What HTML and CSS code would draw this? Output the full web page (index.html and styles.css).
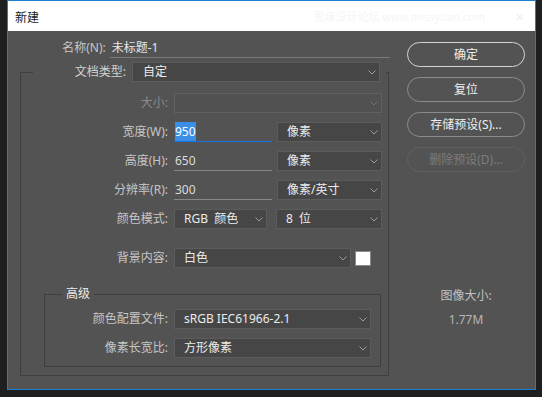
FILE: index.html
```html
<!DOCTYPE html>
<html lang="zh">
<head>
<meta charset="utf-8">
<title>新建</title>
<link rel="stylesheet" href="styles.css">
</head>
<body>
<div class="window">
  <div class="titlebar">
    <span class="title">新建</span>
    <span class="watermark">思缘设计论坛 www.missyuan.com</span>
    <span class="close">✕</span>
  </div>
  <div class="content">
    <div class="form">
      <div class="name-row">
        <span class="name-label">名称(N):</span>
        <div class="name-input">未标题-1</div>
      </div>
      <fieldset class="group main">
        <legend class="main-legend">
          <span class="legend-label">文档类型:</span>
          <div class="select w-doc"><span>自定</span><svg class="chev" width="8" height="5" viewBox="0 0 8 5"><polyline points="0.5,0.5 4,4 7.5,0.5"/></svg></div>
        </legend>
        <div class="rows">
          <div class="row">
            <span class="label disabled">大小:</span>
            <div class="select disabled-select w-size"><span></span><svg class="chev" width="8" height="5" viewBox="0 0 8 5"><polyline points="0.5,0.5 4,4 7.5,0.5"/></svg></div>
          </div>
          <div class="row">
            <span class="label">宽度(W):</span>
            <div class="input focus"><span class="sel">950</span></div>
            <div class="select w-unit"><span>像素</span><svg class="chev" width="8" height="5" viewBox="0 0 8 5"><polyline points="0.5,0.5 4,4 7.5,0.5"/></svg></div>
          </div>
          <div class="row">
            <span class="label">高度(H):</span>
            <div class="input">650</div>
            <div class="select w-unit"><span>像素</span><svg class="chev" width="8" height="5" viewBox="0 0 8 5"><polyline points="0.5,0.5 4,4 7.5,0.5"/></svg></div>
          </div>
          <div class="row">
            <span class="label">分辨率(R):</span>
            <div class="input">300</div>
            <div class="select w-unit"><span>像素/英寸</span><svg class="chev" width="8" height="5" viewBox="0 0 8 5"><polyline points="0.5,0.5 4,4 7.5,0.5"/></svg></div>
          </div>
          <div class="row">
            <span class="label">颜色模式:</span>
            <div class="select w-mode"><span>RGB&nbsp; 颜色</span><svg class="chev" width="8" height="5" viewBox="0 0 8 5"><polyline points="0.5,0.5 4,4 7.5,0.5"/></svg></div>
            <div class="select w-bits"><span>8&nbsp; 位</span><svg class="chev" width="8" height="5" viewBox="0 0 8 5"><polyline points="0.5,0.5 4,4 7.5,0.5"/></svg></div>
          </div>
          <div class="row bg-row">
            <span class="label">背景内容:</span>
            <div class="select w-bg"><span>白色</span><svg class="chev" width="8" height="5" viewBox="0 0 8 5"><polyline points="0.5,0.5 4,4 7.5,0.5"/></svg></div>
            <div class="swatch"></div>
          </div>
        </div>
        <fieldset class="group adv">
          <legend class="adv-legend">高级</legend>
          <div class="rows adv-rows">
            <div class="row">
              <span class="label adv-label">颜色配置文件:</span>
              <div class="select w-adv"><span>sRGB IEC61966-2.1</span><svg class="chev" width="8" height="5" viewBox="0 0 8 5"><polyline points="0.5,0.5 4,4 7.5,0.5"/></svg></div>
            </div>
            <div class="row">
              <span class="label adv-label">像素长宽比:</span>
              <div class="select w-adv"><span>方形像素</span><svg class="chev" width="8" height="5" viewBox="0 0 8 5"><polyline points="0.5,0.5 4,4 7.5,0.5"/></svg></div>
            </div>
          </div>
        </fieldset>
      </fieldset>
    </div>
    <div class="side">
      <button class="btn primary">确定</button>
      <button class="btn">复位</button>
      <button class="btn">存储预设(S)...</button>
      <button class="btn off">删除预设(D)...</button>
      <div class="info">
        <div class="info-label">图像大小:</div>
        <div class="info-value">1.77M</div>
      </div>
    </div>
  </div>
</div>
</body>
</html>
```

FILE: styles.css
```css
* { box-sizing: border-box; }
html, body { margin: 0; padding: 0; }
body {
  background: #1f1f1f;
  width: 542px;
  height: 397px;
  overflow: hidden;
  font-family: "Noto Sans", "Noto Sans CJK SC", sans-serif;
  font-size: 12px;
  line-height: 16px;
}
.window {
  margin-left: 7px;
  width: 529px;
  height: 390px;
  border: 1px solid #1b7fd6;
  background: #535353;
  display: flex;
  flex-direction: column;
}
.titlebar {
  height: 30px;
  background: #ffffff;
  display: flex;
  align-items: center;
  padding-left: 7px;
  padding-top: 1px;
}
.title { color: #1a1a1a; font-family: "Noto Sans CJK SC", sans-serif; }
.watermark {
  margin-left: auto;
  color: #f5f5f5;
  font-size: 11px;
}
.close {
  margin-left: 30px;
  margin-right: 11px;
  color: #eeeeee;
  font-size: 11px;
}
.content {
  flex: 1;
  display: flex;
}
.form {
  width: 382px;
  padding-left: 12px;
}
.name-row {
  margin-top: 7px;
  margin-left: -12px;
  height: 20px;
  display: flex;
  align-items: center;
}
.name-label {
  width: 98px;
  text-align: right;
  color: #c6c6c6;
}
.name-input {
  margin-left: 4px;
  width: 281px;
  height: 20px;
  border-bottom: 1px solid #7a7a7a;
  padding-left: 2px;
  color: #e6e6e6;
  line-height: 19px;
}
.group {
  margin: 0;
  padding: 0;
  min-width: 0;
  border: 1px solid #3f3f3f;
}
.main {
  margin-top: 4px;
  width: 369px;
  padding-bottom: 8px;
}
.main-legend {
  margin-left: 12px;
  margin-bottom: -4px;
  padding: 0 6px 0 0;
  display: flex;
  align-items: center;
}
.legend-label {
  width: 93px;
  text-align: right;
  color: #d2d2d2;
  margin-right: 6px;
}
.rows {
  display: flex;
  flex-direction: column;
  gap: 9px;
  padding-top: 15px;
}
.row {
  display: flex;
  align-items: center;
  height: 20px;
}
.bg-row { margin-top: 10px; }
.label {
  width: 147px;
  text-align: right;
  color: #c6c6c6;
  margin-right: 6px;
}
.label.disabled { color: #8a8a8a; }
.select {
  height: 20px;
  background: #464646;
  border: 1px solid #5c5c5c;
  display: flex;
  align-items: center;
  justify-content: space-between;
  padding: 0 3px 0 9px;
  color: #ececec;
}
.disabled-select { background: #515151; border-color: #606060; }
.chev { fill: none; stroke: #9c9c9c; stroke-width: 1; }
.disabled-select .chev { stroke: #707070; }
.w-doc { width: 248px; padding-left: 10px; }
.w-size { width: 208px; }
.w-unit { width: 105px; margin-left: auto; margin-right: 6px; }
.w-mode { width: 93px; }
.w-bits { width: 106px; margin-left: 9px; }
.w-bg { width: 177px; }
.w-adv { width: 197px; }
.input {
  width: 98px;
  height: 20px;
  border-bottom: 1px solid #888888;
  color: #dcdcdc;
  padding-left: 1px;
  line-height: 19px;
}
.input.focus { border-bottom-color: #1473e6; }
.sel {
  background: #3a8ee6;
  color: #ffffff;
  padding: 1px 0;
}
.swatch {
  width: 16px;
  height: 15px;
  margin-left: 4px;
  background: #ffffff;
  border: 1px solid #8a8a8a;
}
.adv {
  margin-top: 18px;
  margin-left: 23px;
  width: 337px;
  padding-bottom: 8px;
}
.adv-legend {
  margin-left: 17px;
  padding: 0 4px;
  color: #ececec;
  line-height: 16px;
}
.adv-rows { padding-top: 7px; }
.adv-label { width: 123px; }
.side {
  margin-left: 17px;
  width: 118px;
  padding-top: 11px;
  display: flex;
  flex-direction: column;
  gap: 10px;
}
.btn {
  height: 25px;
  border-radius: 13px;
  border: 1px solid #8c8c8c;
  background: transparent;
  color: #efefef;
  font-family: "Noto Sans", "Noto Sans CJK SC", sans-serif;
  font-size: 12px;
  line-height: 16px;
  padding: 0;
}
.btn.primary { border-color: #d4d4d4; }
.btn.off { border-color: #606060; color: #7c7c7c; }
.info {
  margin-top: 106px;
  text-align: center;
}
.info-label { color: #c2c2c2; }
.info-value { margin-top: 8px; color: #b6b6b6; }
```
